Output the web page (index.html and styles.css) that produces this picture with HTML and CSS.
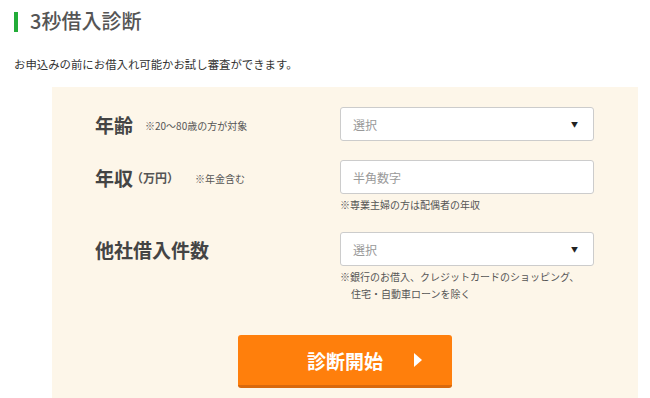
FILE: index.html
```html
<!DOCTYPE html>
<html lang="ja">
<head>
<meta charset="utf-8">
<title>3秒借入診断</title>
<link rel="stylesheet" href="styles.css">
</head>
<body>
<div class="page">
  <h2 class="title">3秒借入診断</h2>
  <p class="lead">お申込みの前にお借入れ可能かお試し審査ができます。</p>
  <div class="panel">
    <div class="form">
      <div class="label"><span class="main">年齢</span><span class="note">※20〜80歳の方が対象</span></div>
      <div class="field">
        <div class="select"><span class="ph">選択</span><span class="arrow">▼</span></div>
      </div>

      <div class="label"><span class="main">年収</span><span class="unit">（万円）</span><span class="note note2">※年金含む</span></div>
      <div class="field">
        <div class="input"><span class="ph">半角数字</span></div>
        <p class="hint">※専業主婦の方は配偶者の年収</p>
      </div>

      <div class="label"><span class="main">他社借入件数</span></div>
      <div class="field">
        <div class="select"><span class="ph">選択</span><span class="arrow">▼</span></div>
        <p class="hint hang">※銀行のお借入、クレジットカードのショッピング、<br>住宅・自動車ローンを除く</p>
      </div>
    </div>
    <div class="actions">
      <button class="btn">診断開始<span class="tri"></span></button>
    </div>
  </div>
</div>
</body>
</html>
```

FILE: styles.css
```css
* { box-sizing: border-box; }
html, body { margin: 0; padding: 0; background: #fff; }
body {
  font-family: "Noto Sans CJK JP", "Noto Sans", sans-serif;
  color: #333;
}
.page { padding: 0 12px 0 14px; }
.title {
  margin: 0;
  padding: 8px 0 0 0;
  display: flex;
  align-items: center;
  font-size: 20px;
  font-weight: 500;
  color: #555;
  line-height: 26px;
  height: 34px;
}
.title::before {
  content: "";
  display: block;
  width: 4px;
  height: 20px;
  background: #22ac38;
  margin-right: 12px;
  margin-top: 2px;
}
.lead {
  margin: 22px 0 0 0;
  font-size: 11.4px;
  line-height: 16px;
  color: #333;
}
.panel {
  margin: 15px 0 0 38px;
  width: 586px;
  height: 330px;
  background: #fdf6e9;
  padding: 20px 0 0 43px;
}
.form {
  display: grid;
  grid-template-columns: 245px 254px;
  row-gap: 19px;
  align-items: start;
}
.label {
  height: 34px;
  display: flex;
  align-items: center;
  white-space: nowrap;
}
.main {
  font-size: 19px;
  font-weight: 700;
  color: #444;
  line-height: 1;
}
.unit {
  font-size: 12px;
  font-weight: 700;
  color: #555;
  margin-left: -2px;
}
.note {
  font-size: 10px;
  color: #555;
  margin-left: 12px;
  margin-top: 2px;
}
.note2 { margin-left: 16px; }
.field { display: flex; flex-direction: column; }
.select, .input {
  height: 34px;
  background: #fff;
  border: 1px solid #ccc;
  border-radius: 3px;
  display: flex;
  align-items: center;
  justify-content: space-between;
  padding: 0 15px 0 12px;
}
.ph { font-size: 12px; color: #999; }
.arrow { font-size: 7px; color: #222; }
.hint {
  margin: 2px 0 0 0;
  font-size: 10px;
  line-height: 17px;
  color: #555;
}
.hang { padding-left: 11px; text-indent: -11px; }
.actions {
  display: flex;
  padding-left: 143px;
  margin-top: 33px;
}
.btn {
  width: 214px;
  height: 53px;
  border: none;
  border-radius: 3px;
  background: #ff7f0c;
  border-bottom: 3px solid #d9690d;
  color: #fff;
  font-family: "Noto Sans CJK JP", sans-serif;
  font-size: 19px;
  font-weight: 700;
  display: flex;
  align-items: center;
  justify-content: flex-start;
  padding: 0 0 0 69px;
  letter-spacing: 0;
}
.tri {
  width: 0;
  height: 0;
  border-top: 7px solid transparent;
  border-bottom: 7px solid transparent;
  border-left: 8px solid #fff;
  margin-left: 31px;
}
```
